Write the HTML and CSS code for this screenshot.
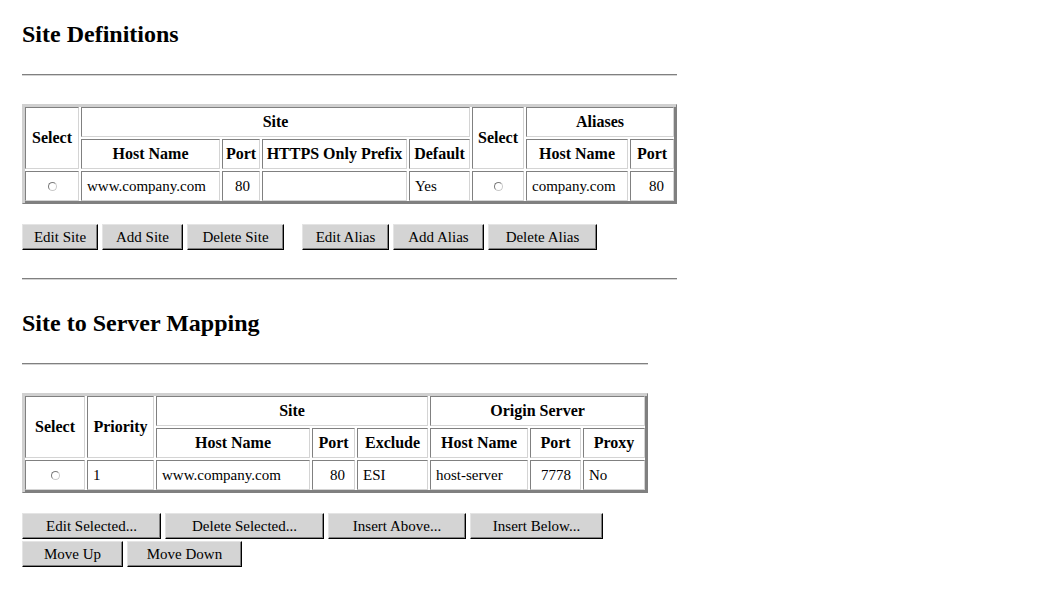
FILE: index.html
```html
<!DOCTYPE html>
<html>
<head>
<meta charset="utf-8">
<title>Site Definitions</title>
<link rel="stylesheet" href="styles.css">
</head>
<body>
<div class="page">
  <section class="sec sec-defs">
    <h2 class="title">Site Definitions</h2>
    <hr class="rule">
    <table class="grid grid-defs">
      <colgroup>
        <col class="c-sel">
        <col class="c-host">
        <col class="c-port">
        <col class="c-https">
        <col class="c-def">
        <col class="c-sel2">
        <col class="c-ahost">
        <col class="c-aport">
      </colgroup>
      <tr>
        <th rowspan="2">Select</th>
        <th colspan="4">Site</th>
        <th rowspan="2">Select</th>
        <th colspan="2">Aliases</th>
      </tr>
      <tr>
        <th>Host Name</th>
        <th>Port</th>
        <th>HTTPS Only Prefix</th>
        <th>Default</th>
        <th>Host Name</th>
        <th>Port</th>
      </tr>
      <tr>
        <td class="center"><span class="radio"></span></td>
        <td>www.company.com</td>
        <td class="num">80</td>
        <td></td>
        <td>Yes</td>
        <td class="center"><span class="radio"></span></td>
        <td>company.com</td>
        <td class="num">80</td>
      </tr>
    </table>
    <div class="buttons">
      <div class="btn-group">
        <button class="btn w-edit-site">Edit Site</button>
        <button class="btn w-add-site">Add Site</button>
        <button class="btn w-del-site">Delete Site</button>
      </div>
      <div class="btn-group alias-group">
        <button class="btn w-edit-alias">Edit Alias</button>
        <button class="btn w-add-alias">Add Alias</button>
        <button class="btn w-del-alias">Delete Alias</button>
      </div>
    </div>
    <hr class="rule rule-end">
  </section>

  <section class="sec sec-map">
    <h2 class="title title-map">Site to Server Mapping</h2>
    <hr class="rule">
    <table class="grid grid-map">
      <colgroup>
        <col class="m-sel">
        <col class="m-pri">
        <col class="m-host">
        <col class="m-port">
        <col class="m-exc">
        <col class="m-ohost">
        <col class="m-oport">
        <col class="m-proxy">
      </colgroup>
      <tr>
        <th rowspan="2">Select</th>
        <th rowspan="2">Priority</th>
        <th colspan="3">Site</th>
        <th colspan="3">Origin Server</th>
      </tr>
      <tr>
        <th>Host Name</th>
        <th>Port</th>
        <th>Exclude</th>
        <th>Host Name</th>
        <th>Port</th>
        <th>Proxy</th>
      </tr>
      <tr>
        <td class="center"><span class="radio"></span></td>
        <td>1</td>
        <td>www.company.com</td>
        <td class="num">80</td>
        <td>ESI</td>
        <td>host-server</td>
        <td class="num">7778</td>
        <td>No</td>
      </tr>
    </table>
    <div class="buttons wrap">
      <button class="btn w-edit-sel">Edit Selected...</button>
      <button class="btn w-del-sel">Delete Selected...</button>
      <button class="btn w-ins-above">Insert Above...</button>
      <button class="btn w-ins-below">Insert Below...</button>
      <button class="btn w-move-up">Move Up</button>
      <button class="btn w-move-down">Move Down</button>
    </div>
  </section>
</div>
</body>
</html>
```

FILE: styles.css
```css
html, body {
  margin: 0;
  padding: 0;
  background: #ffffff;
}

body {
  font-family: "Liberation Serif", "Times New Roman", serif;
  font-size: 15px;
  color: #000000;
}

.page {
  padding: 20px 22px 0 22px;
}

.sec-defs {
  width: 655px;
}

.sec-map {
  width: 626px;
}

.title {
  margin: 0;
  font-size: 24px;
  line-height: 28px;
  font-weight: bold;
}

.title-map {
  margin-top: 29px;
}

.rule {
  margin: 26px 0 28px 0;
  height: 0;
  border: 0;
  border-top: 1px solid #808080;
  border-bottom: 1px solid #d4d4d4;
}

.rule-end {
  margin: 28px 0 0 0;
}

/* Tables */
.grid {
  table-layout: fixed;
  border-collapse: separate;
  border-spacing: 2px;
  border: 1px solid;
  border-color: #d0d0d0 #808080 #808080 #d0d0d0;
  box-shadow: inset 2px 2px 0 #d0d0d0, inset -2px -2px 0 #808080;
}

.grid-defs {
  width: 655px;
}

.grid-map {
  width: 626px;
}

.grid th,
.grid td {
  border: 1px solid;
  border-color: #808080 #d4d4d4 #d4d4d4 #808080;
  padding: 5px 4px 5px 5px;
  line-height: 18px;
  height: 18px;
  white-space: nowrap;
  overflow: hidden;
  vertical-align: middle;
}

.grid th {
  font-size: 16px;
  font-weight: bold;
  text-align: center;
  padding-left: 2px;
  padding-right: 2px;
}

.grid td {
  font-size: 15px;
  text-align: left;
}

.grid td.num {
  text-align: right;
  padding-right: 9px;
}

.grid td.center {
  text-align: center;
}

/* column widths: site definitions (635 total) */
.c-sel { width: 54px; }
.c-host { width: 139px; }
.c-port { width: 38px; }
.c-https { width: 145px; }
.c-def { width: 61px; }
.c-sel2 { width: 52px; }
.c-ahost { width: 102px; }
.c-aport { width: 44px; }

/* column widths: mapping (606 total) */
.m-sel { width: 60px; }
.m-pri { width: 67px; }
.m-host { width: 154px; }
.m-port { width: 43px; }
.m-exc { width: 71px; }
.m-ohost { width: 98px; }
.m-oport { width: 51px; }
.m-proxy { width: 62px; }

.radio {
  display: inline-block;
  width: 7px;
  height: 7px;
  border-radius: 50%;
  border: 1px solid;
  border-color: #7a7a7a #c8c8c8 #c8c8c8 #7a7a7a;
  background: #ffffff;
  vertical-align: middle;
  position: relative;
  top: -1px;
}

/* Buttons */
.buttons {
  display: flex;
  gap: 2px 4px;
  margin-top: 20px;
}

.buttons.wrap {
  flex-wrap: wrap;
}

.btn-group {
  display: flex;
  gap: 4px;
}

.alias-group {
  margin-left: 14px;
}

.btn {
  font-family: "Liberation Serif", "Times New Roman", serif;
  font-size: 15px;
  color: #000000;
  height: 26px;
  margin: 0;
  padding: 0;
  text-align: center;
  background: #d4d4d4;
  border: 1px solid;
  border-color: #e4e4e4 #000000 #000000 #e4e4e4;
  box-shadow: inset -1px -1px 0 #808080;
  border-radius: 0;
  line-height: 22px;
  cursor: default;
}

.w-edit-site { width: 76px; }
.w-add-site { width: 81px; }
.w-del-site { width: 97px; }
.w-edit-alias { width: 87px; }
.w-add-alias { width: 91px; }
.w-del-alias { width: 109px; }

.w-edit-sel { width: 139px; }
.w-del-sel { width: 159px; }
.w-ins-above { width: 138px; }
.w-ins-below { width: 133px; }
.w-move-up { width: 101px; }
.w-move-down { width: 115px; }
```
